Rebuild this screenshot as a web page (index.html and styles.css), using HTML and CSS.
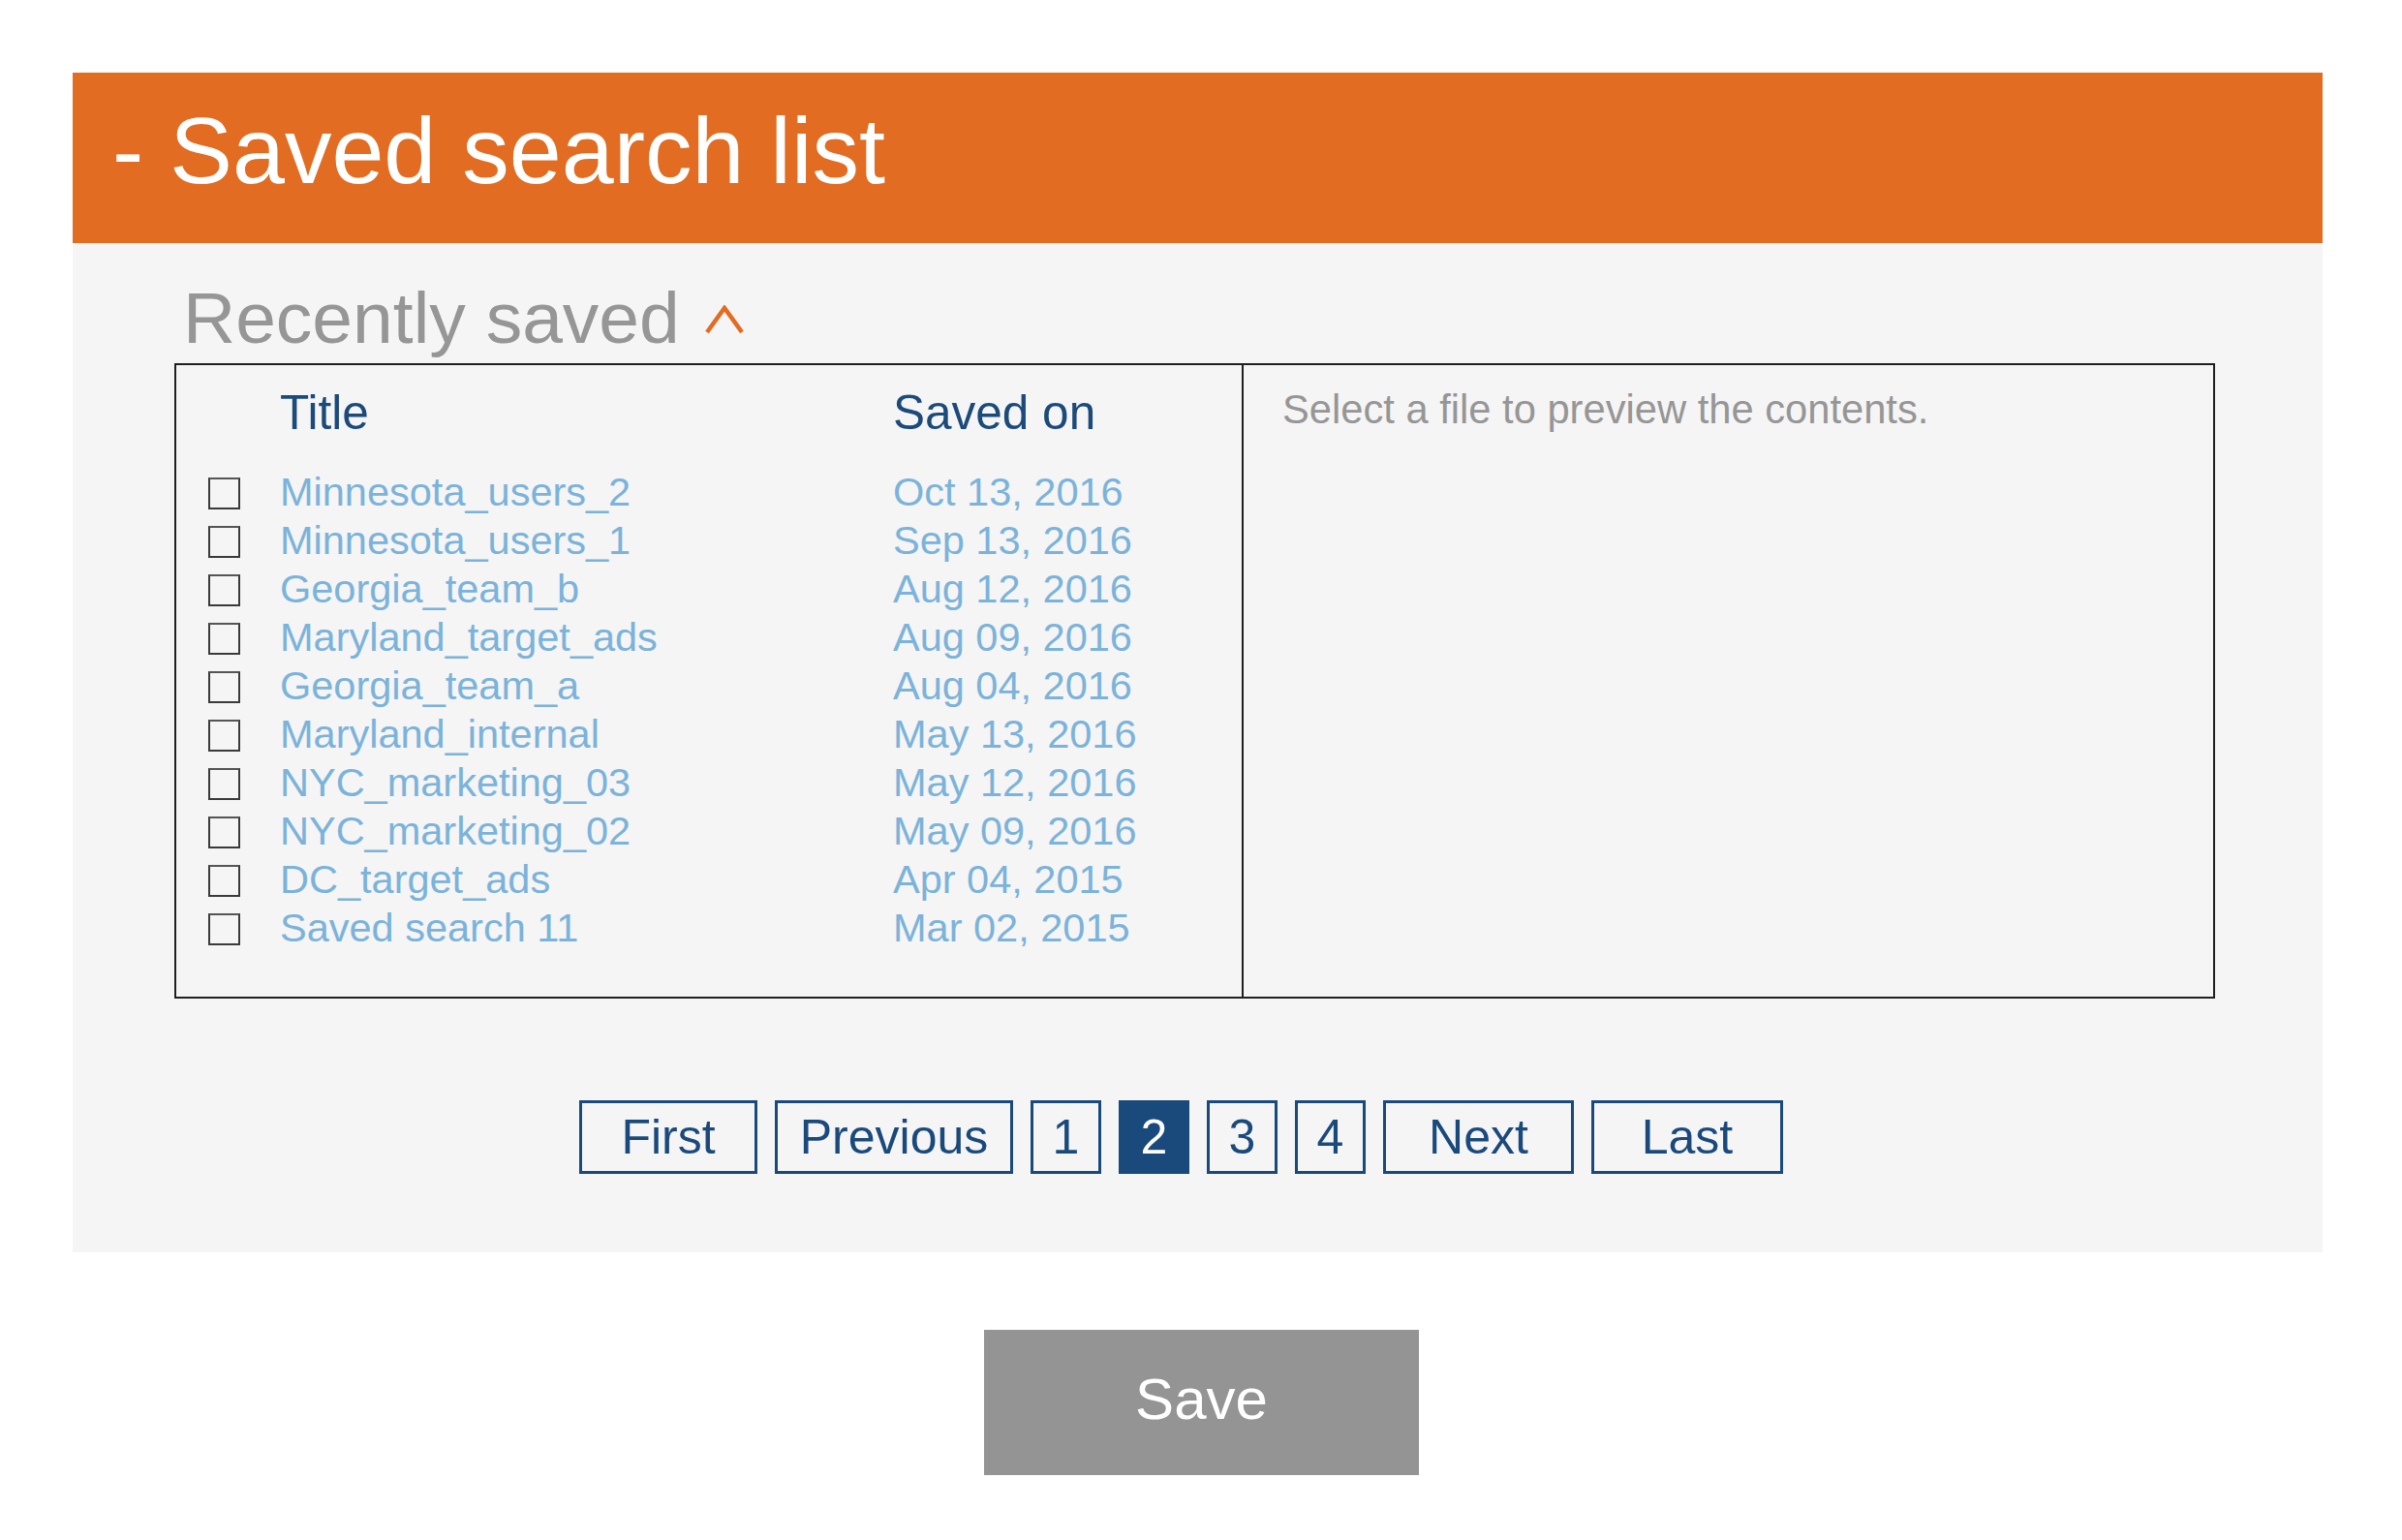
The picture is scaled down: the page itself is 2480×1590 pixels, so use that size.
FILE: index.html
```html
<!DOCTYPE html>
<html lang="en">
<head>
<meta charset="utf-8">
<title>Saved search list</title>
<link rel="stylesheet" href="styles.css">
</head>
<body>
<div class="page">
  <section class="card">
    <header class="card-header">- Saved search list</header>
    <div class="card-body">
      <h2 class="section-title">Recently saved<svg class="caret" width="40" height="30" viewBox="0 0 40 30"><polyline points="2,28 20,3 38,28" fill="none" stroke="#E16C22" stroke-width="4.5"/></svg></h2>
      <div class="browser">
        <div class="list-pane">
          <div class="list-grid">
            <div class="head-cell"></div>
            <div class="head-cell">Title</div>
            <div class="head-cell">Saved on</div>

            <div class="cb-cell"><span class="checkbox"></span></div><div class="cell">Minnesota_users_2</div><div class="cell">Oct 13, 2016</div>
            <div class="cb-cell"><span class="checkbox"></span></div><div class="cell">Minnesota_users_1</div><div class="cell">Sep 13, 2016</div>
            <div class="cb-cell"><span class="checkbox"></span></div><div class="cell">Georgia_team_b</div><div class="cell">Aug 12, 2016</div>
            <div class="cb-cell"><span class="checkbox"></span></div><div class="cell">Maryland_target_ads</div><div class="cell">Aug 09, 2016</div>
            <div class="cb-cell"><span class="checkbox"></span></div><div class="cell">Georgia_team_a</div><div class="cell">Aug 04, 2016</div>
            <div class="cb-cell"><span class="checkbox"></span></div><div class="cell">Maryland_internal</div><div class="cell">May 13, 2016</div>
            <div class="cb-cell"><span class="checkbox"></span></div><div class="cell">NYC_marketing_03</div><div class="cell">May 12, 2016</div>
            <div class="cb-cell"><span class="checkbox"></span></div><div class="cell">NYC_marketing_02</div><div class="cell">May 09, 2016</div>
            <div class="cb-cell"><span class="checkbox"></span></div><div class="cell">DC_target_ads</div><div class="cell">Apr 04, 2015</div>
            <div class="cb-cell"><span class="checkbox"></span></div><div class="cell">Saved search 11</div><div class="cell">Mar 02, 2015</div>
          </div>
        </div>
        <div class="preview-pane">Select a file to preview the contents.</div>
      </div>
      <nav class="pager">
        <span class="pg pg-first">First</span>
        <span class="pg pg-prev">Previous</span>
        <span class="pg pg-num">1</span>
        <span class="pg pg-num active">2</span>
        <span class="pg pg-num">3</span>
        <span class="pg pg-num">4</span>
        <span class="pg pg-next">Next</span>
        <span class="pg pg-last">Last</span>
      </nav>
    </div>
  </section>
  <div class="actions">
    <button class="save-btn">Save</button>
  </div>
</div>
</body>
</html>
```

FILE: styles.css
```css
* { box-sizing: border-box; }

html, body {
  margin: 0;
  padding: 0;
  background: #ffffff;
  font-family: "Liberation Sans", Arial, sans-serif;
}

.page {
  width: 2480px;
  padding: 75px 82px 0 75px;
}

.card {
  width: 2323px;
}

.card-header {
  height: 176px;
  background: #E16C22;
  color: #ffffff;
  font-size: 97px;
  line-height: 96px;
  padding: 33px 0 0 41px;
}

.card-body {
  height: 1042px;
  background: #F5F5F5;
  padding: 40px 111px 0 105px;
}

.section-title {
  margin: 0 0 9px 0;
  padding-left: 9px;
  font-weight: normal;
  font-size: 75px;
  line-height: 75px;
  color: #969696;
  display: flex;
  align-items: center;
}

.caret {
  margin-left: 26px;
  margin-top: 3px;
}

.browser {
  height: 656px;
  border: 2px solid #1f1f1f;
  display: flex;
}

.list-pane {
  width: 1102px;
  border-right: 2px solid #1f1f1f;
  padding: 19px 0 0 33px;
}

.list-grid {
  display: grid;
  grid-template-columns: 74px 633px auto;
  grid-template-rows: 87px;
  grid-auto-rows: 50px;
}

.head-cell {
  font-size: 49.5px;
  line-height: 60px;
  color: #1B4A7B;
}

.cb-cell {
  display: flex;
  align-items: center;
  padding-top: 2px;
}

.checkbox {
  display: block;
  width: 33px;
  height: 33px;
  border: 2px solid #3a3a3a;
  border-top-color: #555;
}

.cell {
  font-size: 41.5px;
  line-height: 50px;
  color: #7BB3DA;
  white-space: nowrap;
}

.preview-pane {
  flex: 1;
  padding: 21px 0 0 40px;
  font-size: 41.7px;
  line-height: 50px;
  color: #969696;
}

.pager {
  display: flex;
  justify-content: center;
  gap: 18px;
  margin-top: 105px;
  padding-right: 28px;
}

.pg {
  height: 76px;
  border: 3px solid #1A4A7C;
  color: #1A4A7C;
  font-size: 50px;
  line-height: 66px;
  padding-top: 2px;
  text-align: center;
}

.pg-first { width: 184px; }
.pg-prev { width: 246px; }
.pg-num { width: 73px; }
.pg-next { width: 197px; }
.pg-last { width: 198px; }

.pg.active {
  background: #1A4A7C;
  color: #ffffff;
}

.actions {
  display: flex;
  justify-content: center;
  padding-top: 80px;
  padding-left: 8px;
}

.save-btn {
  width: 449px;
  height: 150px;
  background: #949494;
  border: none;
  color: #ffffff;
  font-family: "Liberation Sans", Arial, sans-serif;
  font-size: 60px;
  line-height: 144px;
  padding: 0 0 6px 0;
}
```
